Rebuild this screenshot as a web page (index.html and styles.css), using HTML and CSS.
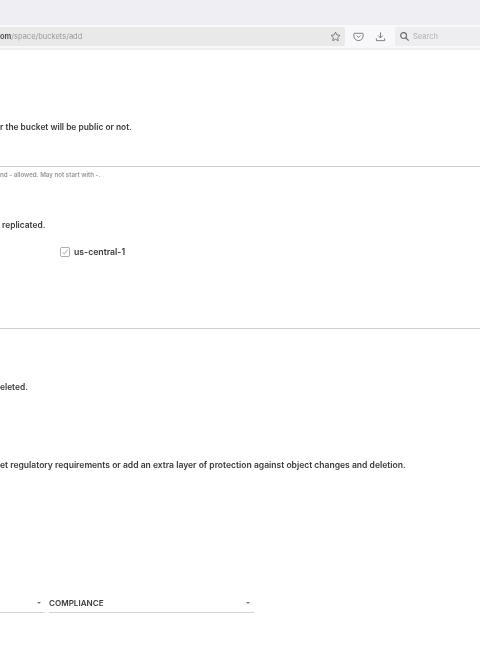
FILE: index.html
```html
<!DOCTYPE html>
<html lang="en">
<head>
  <meta charset="UTF-8">
  <title>Add bucket</title>
  <link rel="stylesheet" href="styles.css">
</head>
<body>
  <div class="tabbar"></div>
  <div class="toolbar">
    <div class="urlbar">
      <span class="url"><b>om</b>/space/buckets/add</span>
      <svg class="icon star" viewBox="0 0 12 12"><path d="M6 1.2l1.5 3.1 3.4.5-2.5 2.4.6 3.4L6 9l-3 1.6.6-3.4L1.1 4.800l3.400-.5z"/></svg>
    </div>
    <svg class="icon pocket" viewBox="0 0 12 12"><path d="M1.500 2.500h9a.5.5 0 0 1 .5.5v2.500a5 5 0 0 1-10 0V3a.5.5 0 0 1 .5-.5z"/><path d="M4 5l2 2 2-2"/></svg>
    <svg class="icon download" viewBox="0 0 12 12"><path d="M6 1.500v6M3.500 5L6 7.500 8.500 5M1.500 8v2.500h9V8"/></svg>
    <div class="searchbar">
      <svg class="icon lens" viewBox="0 0 12 12"><circle cx="5" cy="5" r="3.200"/><path d="M7.500 7.500l3 3"/></svg>
      <span>Search</span>
    </div>
  </div>

  <main class="page">
    <section class="public">
      <p class="desc">r the bucket will be public or not.</p>
    </section>

    <section class="name">
      <div class="rule"></div>
      <p class="hint">nd - allowed. May not start with -.</p>
    </section>

    <section class="regions">
      <p class="desc">&nbsp;replicated.</p>
      <label class="region">
        <svg class="check" viewBox="0 0 11 11"><rect x="0.500" y="0.500" width="10" height="10" rx="1.500"/><path d="M2.800 5.800l1.900 2 3.600-4.800"/></svg>
        us-central-1
      </label>
      <div class="rule rule-regions"></div>
    </section>

    <section class="expiry">
      <p class="desc">eleted.</p>
    </section>

    <section class="lock">
      <p class="desc lock-desc">et regulatory requirements or add an extra layer of protection against object changes and deletion.</p>
      <div class="selects">
        <div class="select select-days"><i class="arrow"></i></div>
        <div class="select select-mode"><span>COMPLIANCE</span><i class="arrow"></i></div>
      </div>
    </section>
  </main>
</body>
</html>
```

FILE: styles.css
```css
html, body {
  margin: 0;
  height: 650px;
  overflow: hidden;
  background: #fff;
}

body {
  font-family: Inter, "Noto Sans", sans-serif;
  color: #3d3d3d;
  filter: blur(0.45px);
}

p {
  margin: 0;
  white-space: nowrap;
}

.tabbar {
  height: 25px;
  background: #eeeef3;
}

.toolbar {
  height: 23px;
  display: flex;
  align-items: center;
  background: #f8f8fa;
  border-bottom: 2px solid #efeff0;
}

.urlbar {
  width: 345px;
  height: 19px;
  flex: none;
  display: flex;
  align-items: center;
  justify-content: space-between;
  padding-right: 4px;
  box-sizing: border-box;
  background: #e9e9ea;
  border-radius: 0 2px 2px 0;
}

.url {
  font-size: 7.500px;
  color: #98989b;
  white-space: nowrap;
}

.url b {
  font-weight: 600;
  color: #47474a;
}

.icon {
  width: 11px;
  height: 11px;
  flex: none;
  fill: none;
  stroke: #6a6a6f;
  stroke-width: 0.900;
}

.pocket {
  margin-left: 8px;
}

.download {
  margin-left: 11px;
}

.searchbar {
  width: 86px;
  height: 19px;
  margin-left: 9px;
  flex: none;
  display: flex;
  align-items: center;
  gap: 3px;
  padding-left: 4px;
  background: #eeeef0;
  border-radius: 2px;
  font-size: 7.500px;
  color: #b0b0b4;
}

.lens {
  stroke-width: 1.300;
}

.page {
  font-size: 8.400px;
  font-weight: 600;
}

.desc {
  line-height: 10px;
  color: #3a3a3c;
}

.lock-desc {
  font-size: 8.550px;
}

.public {
  padding-top: 72px;
}

.name {
  padding-top: 34px;
}

.rule {
  height: 1px;
  background: #cfcfcf;
}

.hint {
  margin-top: 4px;
  font-size: 6.200px;
  line-height: 7px;
  color: #979797;
}

.regions {
  padding-top: 42px;
}

.region {
  display: flex;
  align-items: center;
  gap: 4px;
  margin: 16px 0 0 60px;
  height: 11px;
  font-size: 8.700px;
  color: #3a3a3c;
}

.check {
  width: 10px;
  height: 10px;
  flex: none;
  fill: none;
  stroke: #8c8c8c;
  stroke-width: 0.800;
}

.rule-regions {
  margin-top: 71px;
}

.expiry {
  padding-top: 53px;
}

.lock {
  padding-top: 68px;
}

.selects {
  display: flex;
  gap: 4px;
  margin-top: 126px;
}

.select {
  height: 17px;
  display: flex;
  align-items: center;
  justify-content: space-between;
  padding: 0 4px 3px 0;
  box-sizing: border-box;
  border-bottom: 1px solid #d4d4d4;
  font-size: 8.100px;
  color: #3a3a3c;
}

.select-days {
  width: 45px;
  justify-content: flex-end;
}

.select-mode {
  width: 205px;
}

.arrow {
  width: 0;
  height: 0;
  border-left: 2.500px solid transparent;
  border-right: 2.500px solid transparent;
  border-top: 2.500px solid #777;
}
```
